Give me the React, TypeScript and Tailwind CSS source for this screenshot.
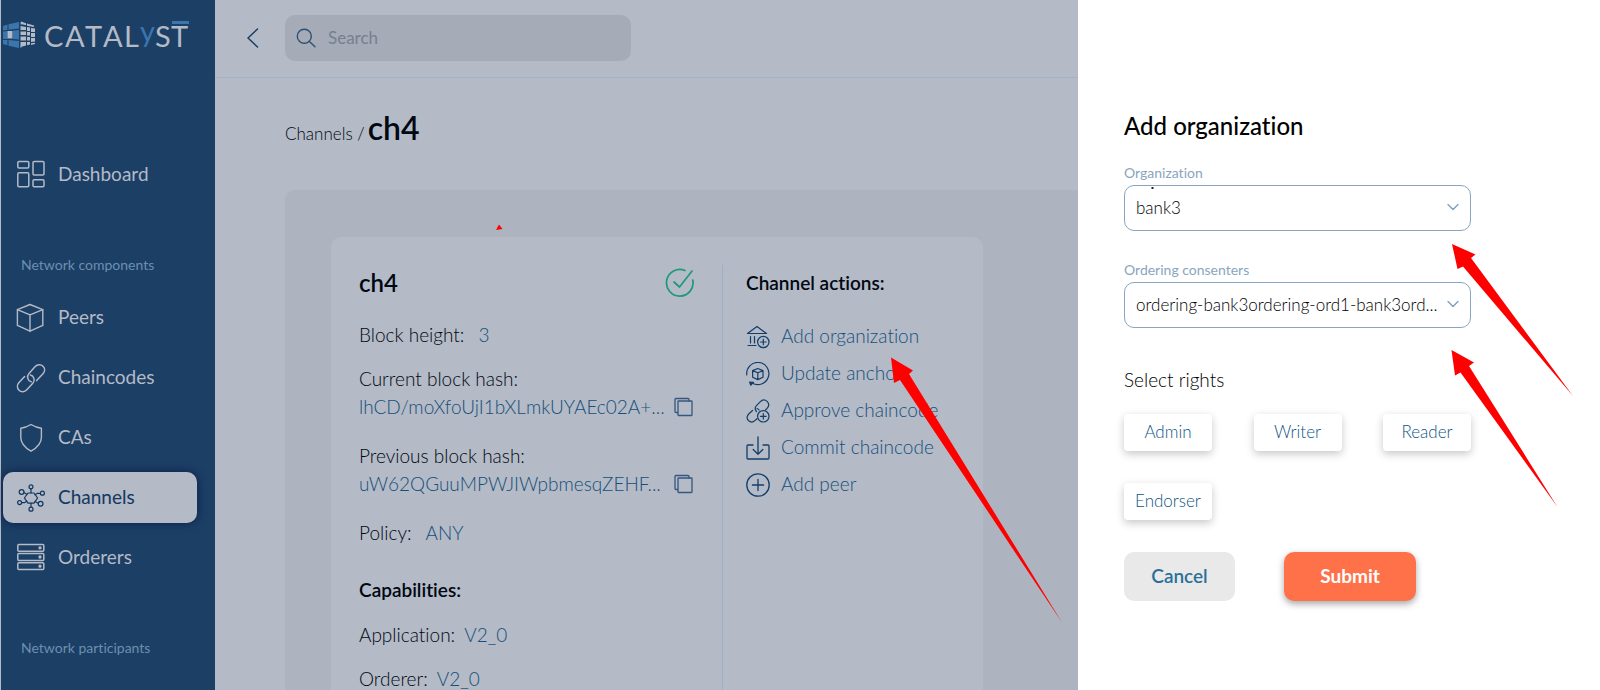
import React from "react";

type IconProps = { className?: string };

function Svg({ className, box = 30, stroke = 1.3, children }: { className?: string; box?: number; stroke?: number; children: React.ReactNode }) {
  return (
    <svg aria-hidden="true" className={className} viewBox={`0 0 ${box} ${box}`} fill="none" stroke="currentColor" strokeWidth={stroke} strokeLinecap="round" strokeLinejoin="round">
      {children}
    </svg>
  );
}

const DashboardIcon = ({ className }: IconProps) => (
  <Svg className={className} stroke={1.5}>
    <rect x="1.8" y="1.4" width="11" height="6.6" rx="1.2" />
    <rect x="1.8" y="12.8" width="11" height="14" rx="1.2" />
    <rect x="17" y="1.4" width="11" height="13.6" rx="1.2" />
    <rect x="17" y="19.8" width="11" height="7" rx="1.2" />
  </Svg>
);

const CubeIcon = ({ className }: IconProps) => (
  <Svg className={className} stroke={1.4}>
    <path d="M14 1.5 26.8 6.6V22.4L14 28.2 1.4 22.4V6.6Z" />
    <path d="M1.4 6.6 14 11.8 26.8 6.6M14 11.8V28.2" />
  </Svg>
);

const LinkIcon = ({ className }: IconProps) => (
  <Svg className={className} stroke={1.5}>
    <path d="M15.2 18.8C11.6 18 10.4 13.2 13 10.4L19.2 3.6C21.4 1.2 24.8 1 27 3.2S29 8.6 27 10.8L20.6 17.6" />
    <path d="M14.4 12C18 12.8 19.4 17.4 16.8 20.2L10.8 26.8C8.6 29.2 5.2 29.4 3 27.2S1 21.8 3 19.6L8.6 13.6" />
  </Svg>
);

const ShieldIcon = ({ className }: IconProps) => (
  <Svg className={className} stroke={1.4}>
    <path d="M15 1.5C18 3.4 21.5 4.8 25.4 5.2V14.5C25.4 20.5 20.5 25 15 28.2 9.5 25 4.8 20.5 4.8 14.5V5.2C8.6 4.8 12 3.4 15 1.5Z" />
  </Svg>
);

const NetworkIcon = ({ className }: IconProps) => (
  <Svg className={className} stroke={1.2}>
    <path d="M12 10h6l3.6 5-3.6 5.200h-6L8.400 15Z" />
    <circle cx="15" cy="3.800" r="2" />
    <circle cx="15" cy="26.200" r="2" />
    <circle cx="5.600" cy="9" r="2.400" />
    <circle cx="26.400" cy="10.200" r="2" />
    <circle cx="3.600" cy="19.600" r="2" />
    <circle cx="24.600" cy="20.800" r="2.400" />
    <path d="M15 5.800V10M15 20.200v4M8 9.600l3 1.800M24.400 10.400h-3.200l-2.200 1.400M5.600 19.600h3.200l2-1.600M22.200 20.200l-3.200-1.800" />
  </Svg>
);

const ServersIcon = ({ className }: IconProps) => (
  <Svg className={className} stroke={1.5}>
    {[1.4, 10.6, 19.8].map((y) => (
      <g key={y}>
        <rect x="1.8" y={y} width="26" height="6.8" rx="1" />
        <circle cx="24" cy={y + 3.4} r="0.9" fill="currentColor" />
      </g>
    ))}
  </Svg>
);

const BankPlusIcon = ({ className }: IconProps) => (
  <Svg className={className} box={24} stroke={1.2}>
    <path d="M1.500 8.500 11 1.500 20.500 8.500Z" />
    <path d="M4.500 11.500v6.500M8.500 11.500v6.500M2 20.500h8" />
    <circle cx="17.300" cy="17" r="5.700" />
    <path d="M17.300 14.200v5.600M14.500 17h5.600" />
  </Svg>
);

const AnchorIcon = ({ className }: IconProps) => (
  <Svg className={className} box={24} stroke={1.2}>
    <path d="M.8 13A11.100 11.100 0 1 1 6 21" />
    <path d="M7.500 20.400 3.600 20 4.800 23.200Z" fill="currentColor" />
    <path d="M11.800 6.500 17 8.600v6.600L11.800 17.600 6.600 15.200V8.600ZM6.600 8.600 11.800 10.800 17 8.600M11.800 10.800v6.800" />
  </Svg>
);

const LinkPlusIcon = ({ className }: IconProps) => (
  <Svg className={className} box={24} stroke={1.2}>
    <path d="M10.500 12.500c-1.800-2-1.700-4.200.2-6.100l3.400-3.600c2.200-2.200 5-2.200 7-.4 2 2 2 4.800 0 7L19.500 11" />
    <path d="M6.500 11.500 2.700 15c-2 2.200-2 4.600-.3 6.500 1.900 1.900 4.600 1.900 6.800-.1l1.800-1.700" />
    <path d="M11 9.500c.9.300 1.600.8 2.100 1.500" />
    <circle cx="17.300" cy="17.300" r="5.700" />
    <path d="M17.300 14.500v5.600M14.500 17.300h5.600" />
  </Svg>
);

const CommitIcon = ({ className }: IconProps) => (
  <Svg className={className} box={24}>
    <path d="M7 9H2a1 1 0 0 0-1 1v12a1 1 0 0 0 1 1h20a1 1 0 0 0 1-1V10a1 1 0 0 0-1-1h-5" />
    <path d="M12 .8v17M7.200 13.500l4.800 4.700 4.800-4.700" />
  </Svg>
);

const PlusCircleIcon = ({ className }: IconProps) => (
  <Svg className={className} box={24}>
    <circle cx="12" cy="12" r="11.200" />
    <path d="M12 6.400v11.200M6.400 12h11.200" />
  </Svg>
);

const CopyIcon = ({ className }: IconProps) => (
  <Svg className={className} box={20}>
    <rect x="4" y="4" width="14" height="14.500" rx="0.500" />
    <path d="M3.500 15.500H2a1 1 0 0 1-1-1V2.500a1 1 0 0 1 1-1h12a1 1 0 0 1 1 1V4" />
  </Svg>
);

const CheckIcon = ({ className }: IconProps) => (
  <Svg className={className} stroke={1.7}>
    <path d="M21 2.500A13.300 13.300 0 1 0 28.800 12" />
    <path d="M10 14l5.500 5L28 3" />
  </Svg>
);

const ChevronDown = ({ className }: IconProps) => (
  <Svg className={className} box={12}>
    <path d="M1 3.500l5 5 5-5" />
  </Svg>
);

function Logo() {
  return (
    <svg role="img" aria-label="Catalyst" className="h-12 w-[194px]" viewBox="0 -8 194 48">
      <g fill="#3a76ad">
        <path d="M1 9 5.500 7.500V12.800L1 13.500ZM6.500 7.200 17 5V11.500L6.500 12.700ZM1 14.500 5.500 14V22H1ZM11 13.500 17 13V22.500L11 22ZM1 23H5.500V28.300L1 27ZM6.500 23 17 24V31L6.500 28.700Z" />
        <path d="M18 5 20 5.600V8L18 7.500ZM18 28.500 20 28.200V30.600L18 31Z" />
      </g>
      <g fill="#b4bac6">
        <rect x="5.500" y="14" width="5" height="7.500" />
        <path d="M19 4.500 24 6.200V8.200L19 7ZM25 6.500 32 8.500V10L25 8.700ZM18.500 9 24 10V13H18.500ZM25 10 28 10.600V14H25ZM29 11 33 11.500V15H29ZM18.500 14.500H24V18H18.500ZM25 15H28V18.500H25ZM29 16H33V20H29ZM18.500 19.500H24V23.500H18.500ZM25 20H28V23.500H25ZM29 21H33V24.500L29 25ZM18.500 25H24V28.500L18.500 30ZM25 25H28V27.500L25 28.200ZM29 26.200 33 25.700V27L29 28Z" />
      </g>
      <g fill="#b4bac6" fontFamily="Lato, sans-serif" fontWeight="400" fontSize="29">
        <text x="42" y="30">C</text>
        <text x="63" y="30">A</text>
        <text x="83" y="30">T</text>
        <text x="101" y="30">A</text>
        <text x="122" y="30">L</text>
        <text x="138" y="25" fill="#3a76ad">y</text>
        <text x="153" y="30">S</text>
        <text x="169" y="30">T</text>
      </g>
      <rect x="170" y="4" width="17" height="3" fill="#3a76ad" />
    </svg>
  );
}

function NavItem({ label, icon: Icon, active = false }: { label: string; icon: React.ComponentType<IconProps>; active?: boolean }) {
  return (
    <a
      href={`#${label.toLowerCase()}`}
      aria-current={active ? "page" : undefined}
      className={
        active
          ? "flex h-[51px] items-center gap-3 rounded-[10px] bg-[#b4bac6] pl-[13px] text-[19px] text-[#123862] shadow-[0_0_10px_rgba(0,10,50,0.6)]"
          : "flex h-[51px] items-center gap-3 pl-[13px] text-[19px] text-[#b4bac6]"
      }
    >
      <Icon className="size-[30px] shrink-0" />
      {label}
    </a>
  );
}

const actions = [
  { label: "Add organization", icon: BankPlusIcon },
  { label: "Update anchors", icon: AnchorIcon },
  { label: "Approve chaincode", icon: LinkPlusIcon },
  { label: "Commit chaincode", icon: CommitIcon },
  { label: "Add peer", icon: PlusCircleIcon },
];

function HashField({ label, value }: { label: string; value: string }) {
  return (
    <div>
      <dt>{label}</dt>
      <dd className="flex items-center justify-between text-[#14507c]">
        {value}
        <button type="button" aria-label={`Copy ${label}`} className="text-[#34577f]">
          <CopyIcon className="size-5" />
        </button>
      </dd>
    </div>
  );
}

function SelectField({ id, label, value }: { id: string; label: string; value: string }) {
  return (
    <div className="flex w-[347px] flex-col">
      <label htmlFor={id} className="text-[14px] leading-6 text-[#89a5c0]">
        {label}
      </label>
      <div className="relative">
        <select id={id} className="h-[46px] w-full appearance-none rounded-[10px] border border-[#89a5c0] bg-white pr-7 pl-[11px] text-[17px] font-light text-black">
          <option>{value}</option>
        </select>
        <ChevronDown className="pointer-events-none absolute top-4 right-3 size-3 text-[#7d9dbb]" />
      </div>
    </div>
  );
}

export default function App() {
  return (
    <div className="relative flex h-screen overflow-hidden bg-[#b4bac6] pl-px font-['Lato',sans-serif] text-[#000812] [font-variant-ligatures:none]">
      <aside className="w-[214px] shrink-0 bg-[#1c3f66]">
        <div className="pt-[9px] pl-px">
          <Logo />
        </div>
        <nav className="pt-[92px] pr-[18px] pl-0.5">
          <NavItem label="Dashboard" icon={DashboardIcon} />
          <h2 className="mt-[53px] pl-[18px] text-[14px] leading-6 text-[#6d8fae]">Network components</h2>
          <div className="mt-[15px] flex flex-col gap-[9px]">
            <NavItem label="Peers" icon={CubeIcon} />
            <NavItem label="Chaincodes" icon={LinkIcon} />
            <NavItem label="CAs" icon={ShieldIcon} />
            <NavItem label="Channels" icon={NetworkIcon} active />
            <NavItem label="Orderers" icon={ServersIcon} />
          </div>
          <h2 className="mt-[53px] pl-[18px] text-[14px] leading-6 text-[#6d8fae]">Network participants</h2>
        </nav>
      </aside>

      <div className="flex min-w-0 flex-1 flex-col">
        <header className="flex h-[78px] shrink-0 items-center border-b border-[#a2b1c5] pb-0.5 pl-7">
          <button type="button" aria-label="Back" className="flex w-[42px] justify-start text-[#164069]">
            <svg className="h-5 w-5" viewBox="0 0 20 20" fill="none" stroke="currentColor" strokeWidth="1.5" strokeLinecap="round" strokeLinejoin="round">
              <path d="M14.500 1 5 10l9.500 9" />
            </svg>
          </button>
          <label className="flex h-[46px] w-[346px] items-center gap-3 rounded-[10px] bg-[#a5abb7] px-[11px]">
            <svg aria-hidden="true" className="size-5 shrink-0 text-[#2b5177]" viewBox="0 0 20 20" fill="none" stroke="currentColor" strokeWidth="1.4" strokeLinecap="round">
              <circle cx="8.300" cy="8.300" r="7" />
              <path d="M13.400 13.400 19 18.800" />
            </svg>
            <input type="search" aria-label="Search" placeholder="Search" className="w-full bg-transparent text-[17px] outline-none placeholder:text-[#75818f]" />
          </label>
        </header>

        <main className="flex min-h-0 flex-1 flex-col overflow-hidden pl-[70px]">
          <div className="flex shrink-0 items-baseline gap-[3px] pt-[30px]">
            <a href="#channels" className="text-[17px] font-light">
              Channels /
            </a>
            <h1 className="text-[32px] leading-10 font-semibold">ch4</h1>
          </div>

          <section className="mt-[42px] flex-1 rounded-tl-[10px] bg-[#adb3bf] pt-[47px] pl-[46px]">
            <div className="flex h-[600px] w-[652px] rounded-[10px] bg-[#b4bac6] pt-7">
              <div className="w-[392px] shrink-0 border-r border-[#9fb0c3] pr-7 pl-7">
                <div className="flex h-9 items-center justify-between">
                  <h2 className="text-[24px] font-semibold">ch4</h2>
                  <CheckIcon className="size-[30px] text-[#1b9b78]" />
                </div>
                <dl className="mt-5 flex flex-col text-[19px] leading-7 font-light">
                  <div className="flex gap-[14px]">
                    <dt>Block height:</dt>
                    <dd className="text-[#14507c]">3</dd>
                  </div>
                  <div className="mt-4 flex flex-col gap-[21px]">
                    <HashField label="Current block hash:" value="lhCD/moXfoUjI1bXLmkUYAEc02A+..." />
                    <HashField label="Previous block hash:" value="uW62QGuuMPWJIWpbmesqZEHF..." />
                    <div className="flex gap-[14px]">
                      <dt>Policy:</dt>
                      <dd className="text-[#14507c]">ANY</dd>
                    </div>
                  </div>
                </dl>
                <h3 className="mt-[29px] text-[19px] leading-7 font-semibold">Capabilities:</h3>
                <dl className="mt-[17px] flex flex-col gap-4 text-[19px] leading-7 font-light">
                  <div className="flex gap-[9px]">
                    <dt>Application:</dt>
                    <dd className="text-[#14507c]">V2_0</dd>
                  </div>
                  <div className="flex gap-[9px]">
                    <dt>Orderer:</dt>
                    <dd className="text-[#14507c]">V2_0</dd>
                  </div>
                </dl>
              </div>

              <div className="flex-1 pl-[23px]">
                <h3 className="text-[19px] leading-9 font-semibold">Channel actions:</h3>
                <ul className="mt-[17px]">
                  {actions.map(({ label, icon: Icon }) => (
                    <li key={label}>
                      <button type="button" className="flex h-[37px] items-center gap-[11px] text-[19px] font-light text-[#14507c]">
                        <Icon className="size-6 text-[#123e6a]" />
                        {label}
                      </button>
                    </li>
                  ))}
                </ul>
              </div>
            </div>
          </section>
        </main>
      </div>

      <form className="w-[522px] shrink-0 bg-white pt-[108px] pl-[46px]" onSubmit={(e) => e.preventDefault()}>
        <h2 className="text-[24px] leading-9 font-medium text-black">Add organization</h2>
        <div className="mt-[17px] flex flex-col gap-[27px]">
          <SelectField id="organization" label="Organization" value="bank3" />
          <SelectField id="consenters" label="Ordering consenters" value="ordering-bank3ordering-ord1-bank3ord..." />
        </div>
        <fieldset className="mt-[38px]">
          <legend className="text-[19px] leading-7 font-light text-black">Select rights</legend>
          <div className="mt-5 grid w-[347px] grid-cols-[88px_88px_88px] justify-between gap-y-8">
            {["Admin", "Writer", "Reader", "Endorser"].map((right) => (
              <button key={right} type="button" className="h-[37px] rounded-[4px] bg-white pb-px text-[17px] font-light text-[#0d5585] shadow-[0_3px_8px_rgba(0,0,0,0.22)]">
                {right}
              </button>
            ))}
          </div>
        </fieldset>
        <div className="mt-8 flex gap-[49px]">
          <button type="button" className="h-[49px] w-[111px] rounded-[10px] bg-[#e9e9e9] text-[19px] font-semibold text-[#2a7199]">
            Cancel
          </button>
          <button type="submit" className="h-[49px] w-[132px] rounded-[10px] bg-[#ff7149] text-[19px] font-bold text-white shadow-[0_3px_7px_rgba(0,0,0,0.35)]">
            Submit
          </button>
        </div>
      </form>

      <svg aria-hidden="true" className="pointer-events-none absolute top-0 right-0 h-[690px] w-[1600px]" viewBox="0 0 1600 690" fill="#ff0000">
        <path d="M891 357.500 913 370.500 909 374 1062 622.500 900 380 894 383Z" />
        <path d="M1452 244 1475.500 254.500 1471 258 1573 396 1463 266.500 1457.500 269Z" />
        <path d="M1451.500 350 1474 362.500 1469 366 1557.500 507 1460.500 372.500 1455 375.500Z" />
        <path d="M499 224.500 502.500 229 496 230Z" />
        <rect x="1151.500" y="187" width="2" height="2" fill="#222" />
      </svg>
    </div>
  );
}
